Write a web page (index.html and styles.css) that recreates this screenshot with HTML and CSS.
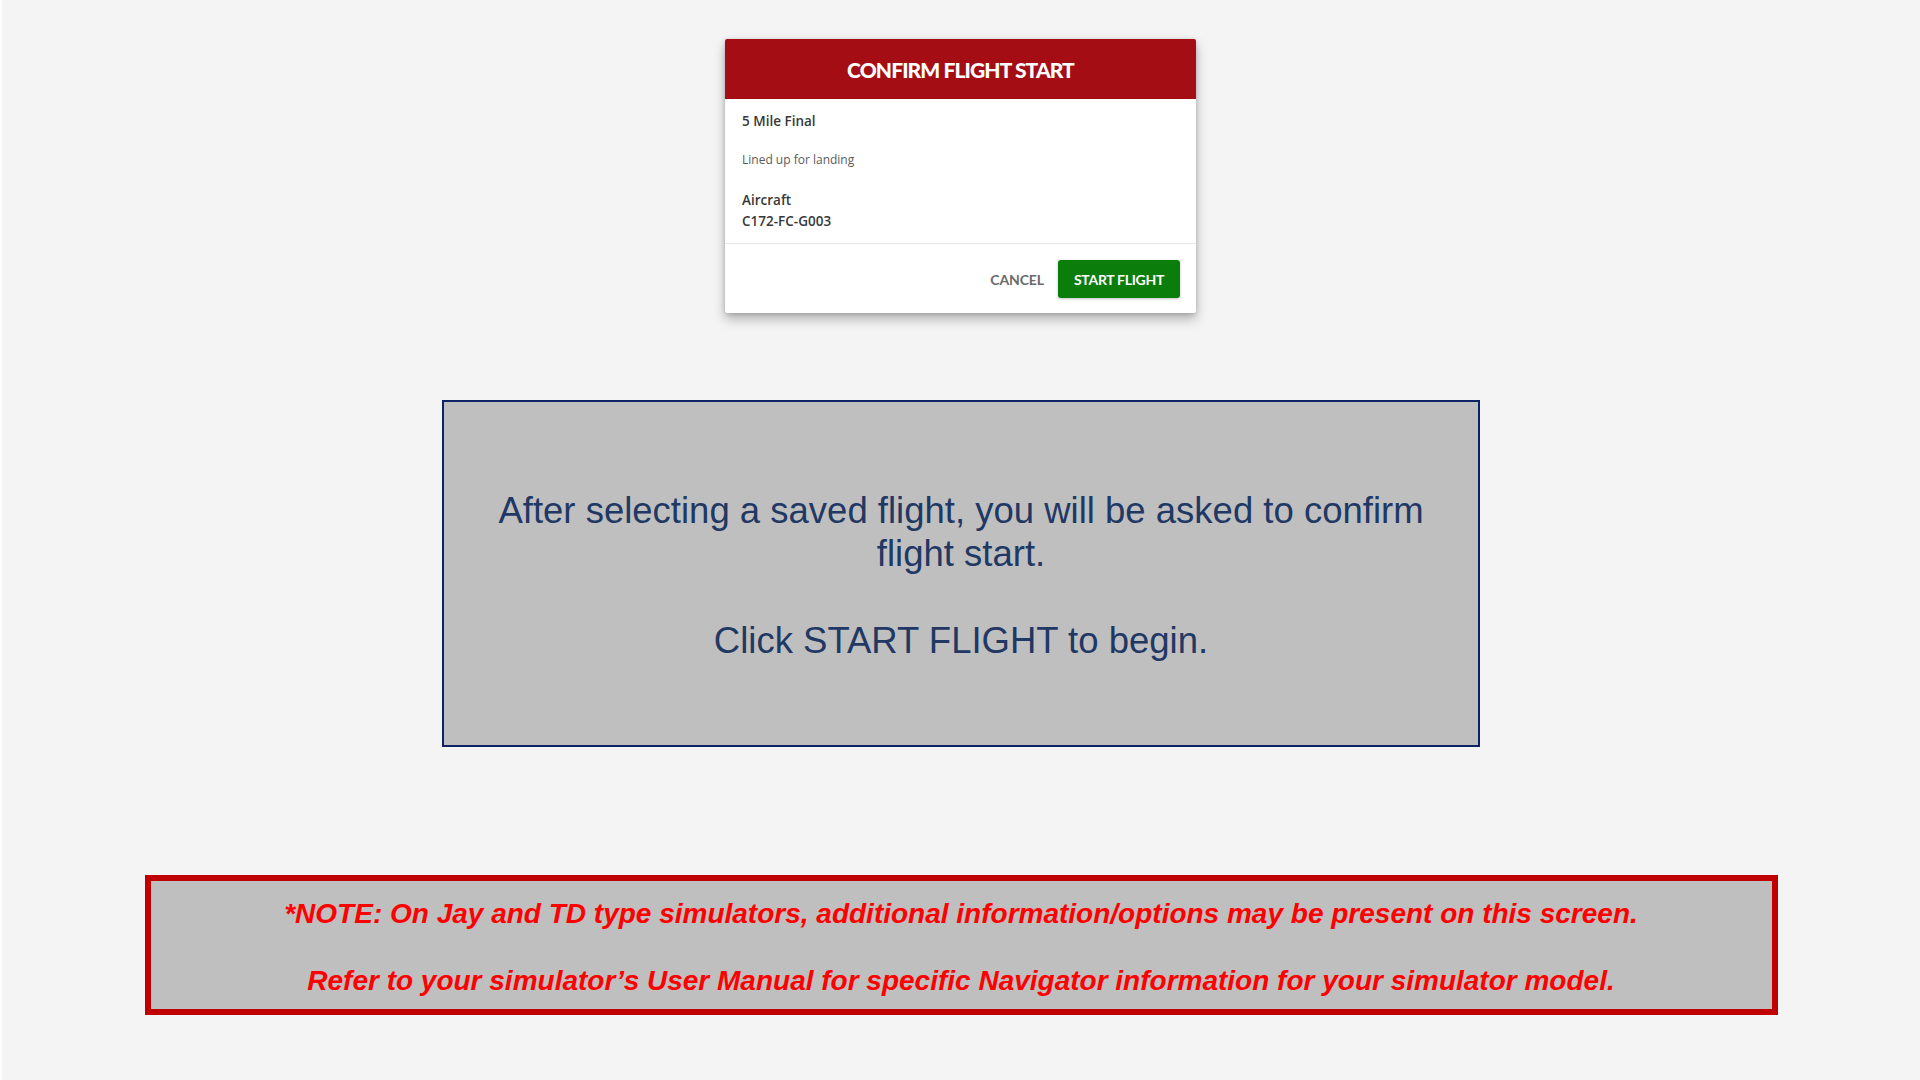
FILE: index.html
```html
<!DOCTYPE html>
<html lang="en">
<head>
<meta charset="utf-8">
<title>Confirm Flight Start</title>
<link rel="stylesheet" href="styles.css">
</head>
<body>
<div class="page">
  <div class="dialog">
    <div class="dialog-header">CONFIRM FLIGHT START</div>
    <div class="dialog-body">
      <div class="flight-name">5 Mile Final</div>
      <div class="flight-desc">Lined up for landing</div>
      <div class="aircraft-label">Aircraft</div>
      <div class="aircraft-id">C172-FC-G003</div>
    </div>
    <div class="dialog-actions">
      <button class="btn-cancel">CANCEL</button>
      <button class="btn-start">START FLIGHT</button>
    </div>
  </div>

  <div class="info-box">
    <p>After selecting a saved flight, you will be asked to confirm<br>flight start.</p>
    <p>Click START FLIGHT to begin.</p>
  </div>

  <div class="note-box">
    <p>*NOTE: On Jay and TD type simulators, additional information/options may be present on this screen.</p>
    <p>Refer to your simulator’s User Manual for specific Navigator information for your simulator model.</p>
  </div>
</div>
</body>
</html>
```
FILE: styles.css
```css
html, body {
  margin: 0;
  padding: 0;
  background: #f4f4f4;
}
.page {
  width: 1920px;
  height: 1080px;
  box-sizing: border-box;
  border-left: 2px solid #fdfdfd;
  display: flex;
  flex-direction: column;
  align-items: center;
  padding-top: 39px;
}
.dialog {
  width: 471px;
  background: #fff;
  border-radius: 2px;
  box-shadow: 0 6px 12px rgba(0,0,0,0.28), 0 1px 4px rgba(0,0,0,0.15);
  margin-left: -1px;
}
.dialog-header {
  height: 60px;
  background: #a50d14;
  color: #fff;
  font-family: Lato, "Open Sans", sans-serif;
  font-weight: 900;
  font-size: 21px;
  letter-spacing: -0.9px;
  display: flex;
  align-items: center;
  justify-content: center;
  border-radius: 2px 2px 0 0;
}
.dialog-body {
  padding: 12px 17px 11px;
  font-family: "Open Sans", sans-serif;
  color: #383838;
  border-bottom: 1px solid #e6e6e6;
}
.flight-name {
  font-size: 13.5px;
  font-weight: 600;
  line-height: 20px;
}
.flight-desc {
  font-size: 12px;
  color: #5a5a5a;
  line-height: 16px;
  margin-top: 21px;
}
.aircraft-label {
  font-size: 13.5px;
  font-weight: 600;
  line-height: 21px;
  margin-top: 22px;
}
.aircraft-id {
  font-size: 13.5px;
  font-weight: 600;
  line-height: 21px;
}
.dialog-actions {
  display: flex;
  justify-content: flex-end;
  align-items: center;
  gap: 14px;
  padding: 16px 16px 15px;
}
.btn-cancel {
  background: none;
  border: none;
  font-family: Lato, sans-serif;
  font-weight: 700;
  font-size: 14px;
  color: #6a6a6a;
  padding: 0;
  letter-spacing: -0.1px;
}
.btn-start {
  width: 122px;
  height: 38px;
  background: #0a7d0a;
  color: #fff;
  border: none;
  border-radius: 3px;
  font-family: Lato, sans-serif;
  font-weight: 700;
  font-size: 14px;
  letter-spacing: -0.3px;
  box-shadow: 0 1px 3px rgba(0,0,0,0.25);
}
.info-box {
  margin-top: 87px;
  width: 1038px;
  height: 347px;
  box-sizing: border-box;
  border: 2px solid #0d2365;
  background: #bfbfbf;
  color: #1f3864;
  font-family: "Liberation Sans", Arial, sans-serif;
  font-size: 36.5px;
  line-height: 43px;
  text-align: center;
  display: flex;
  flex-direction: column;
  justify-content: center;
  padding-top: 4px;
}
.info-box p {
  margin: 0;
}
.info-box p + p {
  margin-top: 44px;
}
.note-box {
  margin-top: 128px;
  width: 1633px;
  height: 140px;
  box-sizing: border-box;
  border: 6px solid #c00000;
  background: #bfbfbf;
  color: #ff0000;
  font-family: "Liberation Sans", Arial, sans-serif;
  font-weight: 700;
  font-style: italic;
  font-size: 28px;
  letter-spacing: 0;
  text-align: center;
  display: flex;
  flex-direction: column;
  justify-content: center;
  padding-top: 4px;
}
.note-box p {
  margin: 0;
  line-height: 33px;
}
.note-box p + p {
  margin-top: 34px;
}
```
